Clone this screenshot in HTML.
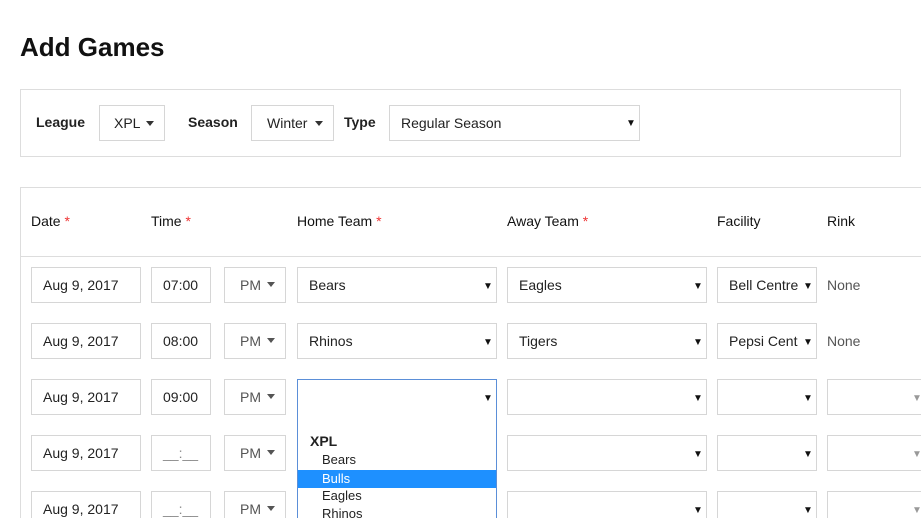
<!DOCTYPE html>
<html><head><style>
*{box-sizing:border-box}
html{overflow:hidden;height:518px}
body{margin:0;width:921px;height:518px;overflow:hidden;background:#fff;font-family:"Liberation Sans",sans-serif;color:#222;position:relative}
.a{position:absolute}
h1{position:absolute;left:20px;top:32px;margin:0;font-size:26px;font-weight:bold;color:#111}
.box{position:absolute;border:1px solid #ddd;background:#fff}
.f{position:absolute;border:1px solid #d6d6d6;background:#fff;height:36px;font-size:14px;line-height:34px;padding-left:11px;color:#222;white-space:nowrap;overflow:hidden}
.lbl{position:absolute;font-size:14px;font-weight:bold;color:#222}
.h{position:absolute;top:213px;font-size:14px;color:#111}
.h b{color:#e33;font-weight:normal}
.car{position:absolute;width:0;height:0;border-left:4px solid transparent;border-right:4px solid transparent;border-top:5px solid #333}
.tri{position:absolute;font-size:10px;color:#111}
.ph{color:#888}
</style></head><body>
<h1>Add Games</h1>
<div class="box" style="left:20px;top:89px;width:881px;height:68px"></div>
<div class="lbl" style="left:36px;top:114px">League</div>
<div class="f" style="left:99px;top:105px;width:66px;padding-left:14px">XPL</div><div class="car" style="left:146px;top:121px"></div>
<div class="lbl" style="left:188px;top:114px">Season</div>
<div class="f" style="left:251px;top:105px;width:83px;padding-left:15px">Winter</div><div class="car" style="left:315px;top:121px"></div>
<div class="lbl" style="left:344px;top:114px">Type</div>
<div class="f" style="left:389px;top:105px;width:251px">Regular Season</div><div class="tri" style="left:626px;top:118px">▼</div>

<div class="box" style="left:20px;top:187px;width:910px;height:331px;border-right:none;border-bottom:none"></div>
<div class="a" style="left:21px;top:256px;width:900px;height:1px;background:#ddd"></div>
<div class="h" style="left:31px">Date <b>*</b></div>
<div class="h" style="left:151px">Time <b>*</b></div>
<div class="h" style="left:297px">Home Team <b>*</b></div>
<div class="h" style="left:507px">Away Team <b>*</b></div>
<div class="h" style="left:717px">Facility</div>
<div class="h" style="left:827px">Rink</div>

<div id="rows"></div>
<script>
var rows=[["07:00","Bears","Eagles","Bell Centre","None"],["08:00","Rhinos","Tigers","Pepsi Cent","None"],["09:00","","","",""],["","","","",""],["","","","",""]];
var h="";
rows.forEach(function(r,i){var y=267+56*i;
h+='<div class="f" style="left:31px;top:'+y+'px;width:110px">Aug 9, 2017</div>';
h+='<div class="f" style="left:151px;top:'+y+'px;width:60px">'+(r[0]||'<span class="ph">__:__</span>')+'</div>';
h+='<div class="f" style="left:224px;top:'+y+'px;width:62px;padding-left:15px;color:#555">PM</div><div class="car" style="left:267px;top:'+(y+15)+'px;border-top-color:#555"></div>';
h+='<div class="f" style="left:297px;top:'+y+'px;width:200px;'+(i==2?'border-color:#5b8fd8':'')+'">'+r[1]+'</div><div class="tri" style="left:483px;top:'+(y+14)+'px">▼</div>';
h+='<div class="f" style="left:507px;top:'+y+'px;width:200px">'+r[2]+'</div><div class="tri" style="left:693px;top:'+(y+14)+'px">▼</div>';
h+='<div class="f" style="left:717px;top:'+y+'px;width:100px;padding-right:16px">'+r[3]+'</div><div class="tri" style="left:803px;top:'+(y+14)+'px">▼</div>';
if(i<2)h+='<div class="a" style="left:827px;top:'+(y+10)+'px;font-size:14px;color:#555">None</div>';
else h+='<div class="f" style="left:827px;top:'+y+'px;width:110px"></div><div class="tri" style="left:912px;top:'+(y+14)+'px;color:#999">▼</div>';
});
document.getElementById('rows').innerHTML=h;
</script>
<div class="a" style="left:297px;top:414px;width:200px;height:104px;border:1px solid #5b8fd8;border-top:none;border-bottom:none;background:#fff;font-size:13px;overflow:hidden">
<div class="a" style="left:12px;top:19px;font-weight:bold;font-size:14px">XPL</div>
<div class="a" style="left:24px;top:38px">Bears</div>
<div class="a" style="left:0;top:56px;width:198px;height:18px;background:#1e90ff;color:#fff;padding-left:24px;line-height:17px">Bulls</div>
<div class="a" style="left:24px;top:74px">Eagles</div>
<div class="a" style="left:24px;top:92px">Rhinos</div>
</div>
</body></html>
